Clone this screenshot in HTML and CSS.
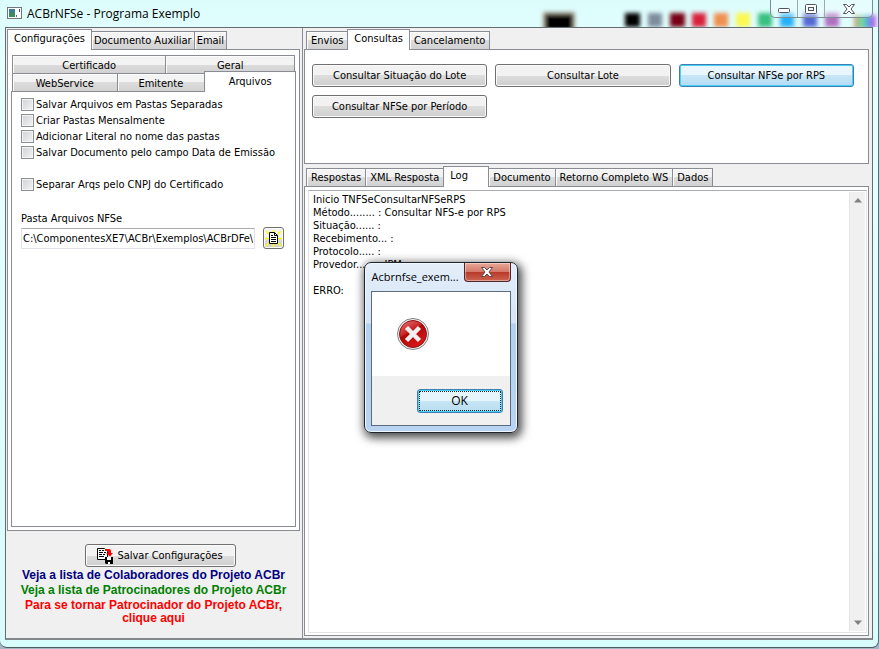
FILE: index.html
```
<!DOCTYPE html>
<html lang="pt-BR">
<head>
    <meta charset="UTF-8">
    <meta name="viewport" content="width=device-width, initial-scale=1.0">
    <title>ACBrNFSe - Programa Exemplo</title>
    <link rel="stylesheet" href="styles.css">
</head>
<body>

    <div class="window">
        <!-- Title bar, the desktop shows through the glass -->
        <div class="titlebar">
            <svg class="glass" width="360" height="27" viewBox="0 0 360 27">
                <defs>
                    <filter id="soft" x="-20%" y="-50%" width="140%" height="200%"><feGaussianBlur stdDeviation="2"/></filter>
                    <linearGradient id="rainbow">
                        <stop offset="0" stop-color="#d8a080"/>
                        <stop offset="0.4" stop-color="#60e0a0"/>
                        <stop offset="0.7" stop-color="#6090f0"/>
                        <stop offset="1" stop-color="#e050e0"/>
                    </linearGradient>
                </defs>
                <g filter="url(#soft)">
                    <rect x="24" y="12" width="32" height="18" fill="#a9a18f"/>
                    <rect x="26" y="14" width="28" height="16" fill="#000"/>
                    <rect x="106" y="13" width="15" height="14" fill="#000"/>
                    <rect x="129" y="13" width="14" height="14" fill="#7f8c9c"/>
                    <rect x="151" y="13" width="15" height="14" fill="#780018"/>
                    <rect x="173" y="13" width="14" height="14" fill="#d8203a"/>
                    <rect x="195" y="13" width="14" height="14" fill="#f09050"/>
                    <rect x="217" y="13" width="14" height="14" fill="#fcf850"/>
                    <rect x="239" y="13" width="14" height="14" fill="#38c080"/>
                    <rect x="261" y="13" width="14" height="14" fill="#28b0f8"/>
                    <rect x="284" y="13" width="14" height="14" fill="#5468d4"/>
                    <rect x="306" y="13" width="14" height="14" fill="#b070c0"/>
                    <rect x="335" y="15" width="22" height="14" fill="url(#rainbow)"/>
                </g>
            </svg>
            <svg class="app-icon" width="15" height="13" viewBox="0 0 15 13">
                <rect x="0.5" y="0.5" width="14" height="11" fill="#fff" stroke="#70787c"/>
                <rect x="2" y="2" width="6" height="8" fill="#3c7c8c"/>
                <rect x="2" y="6" width="6" height="4" fill="#3c8c5c"/>
                <rect x="9" y="8" width="1" height="2" fill="#667"/>
                <rect x="12" y="2" width="1" height="3" fill="#445"/>
            </svg>
            <span class="title">ACBrNFSe - Programa Exemplo</span>
            <div class="win-buttons">
                <button aria-label="Minimizar"><svg width="12" height="12" viewBox="0 0 12 12"><rect x="0.5" y="5.5" width="11" height="4" rx="1" fill="#fff" stroke="#4c545c"/></svg></button>
                <button aria-label="Maximizar"><svg width="12" height="12" viewBox="0 0 12 12"><rect x="0.5" y="1.5" width="11" height="9" rx="1" fill="#fff" stroke="#4c545c"/><rect x="3.5" y="4.5" width="5" height="3" fill="#e4f4f8" stroke="#4c545c"/></svg></button>
                <button class="wide" aria-label="Fechar"><svg width="12" height="12" viewBox="0 0 12 12"><path d="M0.500 1.500h3L6 4l2.500-2.500h3L8 6l3.500 4.500h-3L6 8l-2.500 2.500h-3L4 6z" fill="#fff" stroke="#4c545c"/></svg></button>
            </div>
        </div>

        <div class="client">
            <div class="sidebar">
                <div class="tabs" role="tablist">
                    <button class="tab active" role="tab">Configurações</button>
                    <button class="tab" role="tab">Documento Auxiliar</button>
                    <button class="tab" role="tab">Email</button>
                </div>
                <div class="page config-page">
                    <div class="tab-row" role="tablist">
                        <button class="tab certificado" role="tab">Certificado</button>
                        <button class="tab geral" role="tab">Geral</button>
                    </div>
                    <div class="tab-row last" role="tablist">
                        <button class="tab webservice" role="tab">WebService</button>
                        <button class="tab emitente" role="tab">Emitente</button>
                        <button class="tab arquivos active" role="tab">Arquivos</button>
                    </div>
                    <div class="page files-page">
                        <label class="check"><input type="checkbox">Salvar Arquivos em Pastas Separadas</label>
                        <label class="check"><input type="checkbox">Criar Pastas Mensalmente</label>
                        <label class="check"><input type="checkbox">Adicionar Literal no nome das pastas</label>
                        <label class="check"><input type="checkbox">Salvar Documento pelo campo Data de Emissão</label>
                        <label class="check spaced"><input type="checkbox">Separar Arqs pelo CNPJ do Certificado</label>
                        <label class="field-label" for="pasta">Pasta Arquivos NFSe</label>
                        <div class="field">
                            <input type="text" id="pasta" value="C:\ComponentesXE7\ACBr\Exemplos\ACBrDFe\ACBrNFSe">
                            <button class="btn browse" aria-label="Escolher pasta">
                                <svg width="17" height="17" viewBox="0 0 17 17">
                                    <path d="M1 1l15 15M16 1L1 16M8.500 0v17M0 8.500h17" stroke="#ffff00" stroke-width="1.500"/>
                                    <path d="M4.500 2.500h5l3 3v8h-8z" fill="#fff" stroke="#000"/>
                                    <path d="M9.500 2.500v3h3M6 5.500h2M6 7.500h5M6 9.500h5M6 11.500h5" fill="none" stroke="#000"/>
                                </svg>
                            </button>
                        </div>
                    </div>
                </div>

                <div class="footer">
                    <button class="btn save">
                        <svg width="17" height="17" viewBox="0 0 17 17">
                            <path d="M0.500 1.500h7l3 3v8h-10z" fill="#fff" stroke="#000"/>
                            <path d="M2 3.500h2M5 3.500h2M2 5.500h4M7 5.500h2M2 7.500h3M6 7.500h2M2 9.500h5" stroke="#000"/>
                            <path d="M8 2h4q2 0 2 2v2h2l-3 3.500L9 6h2V4H8z" fill="#f00"/>
                            <path d="M8 10h8v7H9l-1-1z" fill="#000"/>
                            <path d="M10 10h4v3h-4zM11 15h2v2h-2z" fill="#fff"/>
                        </svg>
                        Salvar Configurações
                    </button>
                    <a class="navy" href="#">Veja a lista de Colaboradores do Projeto ACBr</a>
                    <a class="green" href="#">Veja a lista de Patrocinadores do Projeto ACBr</a>
                    <a class="red" href="#">Para se tornar Patrocinador do Projeto ACBr,<br>clique aqui</a>
                </div>
            </div>

            <div class="main">
                <div class="tabs" role="tablist">
                    <button class="tab" role="tab">Envios</button>
                    <button class="tab active" role="tab">Consultas</button>
                    <button class="tab" role="tab">Cancelamento</button>
                </div>
                <div class="page actions">
                    <button class="btn">Consultar Situação do Lote</button>
                    <button class="btn">Consultar Lote</button>
                    <button class="btn hot">Consultar NFSe por RPS</button>
                    <button class="btn">Consultar NFSe por Período</button>
                </div>

                <div class="tabs results" role="tablist">
                    <button class="tab" role="tab">Respostas</button>
                    <button class="tab" role="tab">XML Resposta</button>
                    <button class="tab active log" role="tab">Log</button>
                    <button class="tab" role="tab">Documento</button>
                    <button class="tab" role="tab">Retorno Completo WS</button>
                    <button class="tab" role="tab">Dados</button>
                </div>
                <div class="page log-page">
                    <div class="memo">
                        <textarea aria-label="Log" readonly>Inicio TNFSeConsultarNFSeRPS
Método........ : Consultar NFS-e por RPS
Situação...... :
Recebimento... :
Protocolo..... :
Provedor...... : IPM

ERRO:</textarea>
                        <div class="scrollbar">
                            <svg width="8" height="5" viewBox="0 0 8 5"><path d="M0 4.500L4 0l4 4.500z" fill="#808080"/></svg>
                            <svg width="8" height="5" viewBox="0 0 8 5"><path d="M0 0.500h8L4 5z" fill="#808080"/></svg>
                        </div>
                    </div>
                </div>
            </div>
        </div>
    </div>

    <!-- Error message -->
    <div class="dialog" role="alertdialog" aria-label="Acbrnfse_exemplo">
        <div class="dialog-title">
            <span>Acbrnfse_exem...</span>
            <button class="dialog-close" aria-label="Fechar"><svg width="12" height="12" viewBox="0 0 12 12"><path d="M0.500 1.500h3L6 4l2.500-2.500h3L8 6l3.500 4.500h-3L6 8l-2.500 2.500h-3L4 6z" fill="#fff" stroke="#5c4448"/></svg></button>
        </div>
        <div class="dialog-box">
            <div class="dialog-body">
                <svg width="34" height="34" viewBox="0 0 34 34">
                    <defs>
                        <linearGradient id="red" x2="0.600" y2="1">
                            <stop offset="0" stop-color="#e88080"/>
                            <stop offset="0.450" stop-color="#c82424"/>
                            <stop offset="0.500" stop-color="#b00808"/>
                            <stop offset="1" stop-color="#d81818"/>
                        </linearGradient>
                    </defs>
                    <circle cx="17" cy="17" r="15.500" fill="#f4f4f4" stroke="#808080"/>
                    <circle cx="17" cy="17" r="13.500" fill="url(#red)" stroke="#901010"/>
                    <path d="M10.500 10.500l13 13M23.500 10.500l-13 13" stroke="#f0f0f0" stroke-width="4.500"/>
                </svg>
            </div>
            <div class="dialog-footer">
                <button class="ok">OK</button>
            </div>
        </div>
    </div>

</body>
</html>
```
FILE: styles.css
```
* {
    box-sizing: border-box;
}
body {
    margin: 0;
    height: 100vh;
    overflow: hidden;
    background-color: #a4b4c4;
    font-family: "DejaVu Sans Condensed", Tahoma, sans-serif;
    font-size: 11px;
    line-height: 13px;
    color: #000;
}
button, input, textarea {
    font: inherit;
    color: inherit;
}
button {
    margin: 0;
    padding: 0;
    white-space: nowrap;
}
svg {
    display: block;
    flex: none;
}

/* Window */
.window {
    display: flex;
    flex-direction: column;
    height: calc(100vh - 1px);
    padding: 0 5px 7px;
    border-right: 1px solid #5c6c74;
    border-bottom: 1px solid #4c5c60;
    border-radius: 0 0 7px 7px;
    background: linear-gradient(#dcfcfc, #e6ffff 60px, #d8fcfc);
}
.titlebar {
    position: relative;
    display: flex;
    align-items: center;
    flex: none;
    height: 27px;
    padding-left: 2px;
}
.glass {
    position: absolute;
    right: -6px;
    top: 0;
}
.title {
    margin-left: 5px;
    font-family: "Open Sans", sans-serif;
    font-size: 12px;
}
.win-buttons {
    position: relative;
    display: flex;
    align-self: flex-start;
    height: 18px;
    margin-left: auto;
    border: 1px solid #7c8c94;
    border-top: 0;
    border-radius: 0 0 5px 5px;
    background-color: rgba(255, 255, 255, 0.3);
}
.win-buttons button {
    display: flex;
    align-items: center;
    justify-content: center;
    width: 27px;
    border: 0;
    border-right: 1px solid #9caab0;
    background: none;
}
.win-buttons button.wide {
    width: 47px;
    border-right: 0;
}
.client {
    display: flex;
    flex: 1;
    min-height: 0;
    border: 1px solid #646c70;
    border-bottom: 2px solid #84888a;
    background-color: #f0f0f0;
}
.sidebar {
    display: flex;
    flex-direction: column;
    flex: none;
    width: 297px;
    padding: 1px 2px 0 1px;
    border-right: 1px solid #898c95;
}
.main {
    display: flex;
    flex-direction: column;
    flex: 1;
    min-width: 0;
    padding: 1px 3px 2px 1px;
}

/* Tabs */
.tabs {
    display: flex;
    align-items: flex-end;
    flex: none;
    height: 20px;
    padding-left: 2px;
}
.tab {
    height: 18px;
    padding: 0 4px;
    border: 1px solid #898c95;
    border-bottom: 0;
    background: linear-gradient(#f3f3f3 50%, #dcdcdc 50%, #d2d2d2);
    box-shadow: inset 1px 1px 0 #fcfcfc;
}
.tab + .tab {
    margin-left: -1px;
}
.tab.active {
    position: relative;
    height: 21px;
    margin-bottom: -1px;
    padding: 0 6px 3px;
    background: #fff;
}
.tab.log {
    width: 46px;
    text-align: left;
}
.sidebar .tabs {
    padding-left: 0;
}
.sidebar .tab {
    padding: 0 2px;
}
.sidebar .tab.active {
    padding: 0 6px 3px;
}
.page {
    border: 1px solid #898c95;
    background-color: #fff;
}

/* Settings */
.config-page {
    display: flex;
    flex-direction: column;
    flex: 1;
    padding: 5px 3px 3px;
}
.sidebar .tab-row {
    display: flex;
    align-items: flex-end;
    height: 18px;
    padding: 0 1px;
}
.sidebar .tab-row.last {
    padding-right: 0;
}
.sidebar .tab-row .tab {
    padding: 1px 0 0;
}
.sidebar .tab-row .tab.active {
    padding: 0 0 2px;
}
.certificado {
    flex: 153;
}
.geral {
    flex: 128;
}
.webservice {
    flex: 105;
}
.emitente {
    flex: 88;
}
.arquivos {
    flex: 91;
}
.files-page {
    flex: 1;
    padding: 4px 11px 0 9px;
}
.check {
    display: flex;
    align-items: center;
    height: 16px;
    white-space: nowrap;
}
.check.spaced {
    margin-top: 16px;
}
.check input {
    appearance: none;
    width: 13px;
    height: 13px;
    margin: 0 2px 0 0;
    border: 1px solid #8e8f8f;
    background: linear-gradient(135deg, #cfd2d6, #f4f4f4);
    box-shadow: inset 0 0 0 1px #f4f4f4;
}
.field-label {
    display: block;
    margin-top: 20px;
}
.field {
    display: flex;
    align-items: center;
    gap: 8px;
    margin-top: 2px;
}
.field input {
    flex: 1;
    min-width: 0;
    height: 21px;
    padding: 0 1px;
    border: 1px solid #e2e3ea;
    border-top-color: #abadb3;
}
.btn {
    display: flex;
    align-items: center;
    justify-content: center;
    height: 23px;
    border: 1px solid #707070;
    border-radius: 3px;
    background: linear-gradient(#f2f2f2 50%, #dddddd 50%, #cfcfcf);
    box-shadow: inset 0 0 0 1px #fbfbfb;
}
.btn.hot {
    border-color: #3c7fb1;
    background: linear-gradient(#eaf6fd 50%, #c8e6f7 50%, #b4dcf4);
    box-shadow: inset 0 0 0 1px #48d0fa;
}
.browse {
    width: 21px;
    height: 22px;
}
.footer {
    display: flex;
    flex-direction: column;
    align-items: center;
    flex: none;
    height: 107px;
    padding-top: 13px;
    font-family: "Liberation Sans", Arial, sans-serif;
    font-size: 12px;
    font-weight: bold;
    text-align: center;
}
.save {
    gap: 3px;
    width: 151px;
    margin-left: 13px;
    font-family: "DejaVu Sans Condensed", Tahoma, sans-serif;
    font-size: 11px;
    font-weight: normal;
}
.footer a {
    margin-top: 2px;
    text-decoration: none;
    white-space: nowrap;
}
.navy {
    color: #000080;
}
.green {
    color: #008000;
}
.red {
    color: #ff0000;
}

/* Queries */
.actions {
    display: grid;
    grid-template-columns: 1fr 1fr 1fr;
    align-content: start;
    gap: 8px;
    flex: none;
    height: 115px;
    padding: 14px 14px 0 7px;
}
.results {
    height: 22px;
}
.log-page {
    display: flex;
    flex: 1;
    min-height: 0;
    padding: 3px 1px 2px 3px;
}
.memo {
    display: flex;
    flex: 1;
    padding: 1px;
    border: 1px solid #e2e3ea;
    border-top-color: #abadb3;
}
.memo textarea {
    flex: 1;
    padding: 1px 3px;
    border: 0;
    outline: 0;
    overflow: hidden;
    resize: none;
}
.scrollbar {
    display: flex;
    flex-direction: column;
    align-items: center;
    justify-content: space-between;
    width: 16px;
    padding: 6px 0;
    border-left: 1px solid #e4e4e4;
    background-color: #f0f0f0;
}

/* Error dialog */
.dialog {
    position: absolute;
    left: calc(50% - 76px);
    top: calc(50% - 63px);
    width: 154px;
    height: 171px;
    padding: 0 6px 6px;
    border: 1px solid #20242c;
    border-radius: 7px;
    background: linear-gradient(#e4eefa, #d4e4f6 60px, #b4d0f0 61px, #b8d4f2);
    box-shadow: inset 0 0 0 1px #f0f8ff, 2px 3px 10px 2px rgba(0, 0, 0, 0.7);
}
.dialog-title {
    display: flex;
    justify-content: space-between;
    height: 28px;
    padding-left: 1px;
    font-family: "Open Sans", sans-serif;
    line-height: 28px;
}
.dialog-title span {
    white-space: nowrap;
}
.dialog-close {
    display: flex;
    align-items: center;
    justify-content: center;
    flex: none;
    width: 47px;
    height: 19px;
    border: 1px solid #50242c;
    border-top: 0;
    border-radius: 0 0 4px 4px;
    background: linear-gradient(#e8a898, #d47868 50%, #b83828 50%, #cc6450);
    box-shadow: inset 0 0 0 1px rgba(255, 255, 255, 0.4);
}
.dialog-box {
    display: flex;
    flex-direction: column;
    height: 135px;
    border: 1px solid #5c6c7c;
    background-color: #f0f0f0;
}
.dialog-body {
    flex: 1;
    padding: 25px 24px;
    background-color: #fff;
}
.dialog-footer {
    display: flex;
    justify-content: flex-end;
    flex: none;
    height: 49px;
    padding: 13px 7px 0;
}
.ok {
    width: 86px;
    height: 24px;
    border: 1px solid #3c7fb1;
    border-radius: 3px;
    background: linear-gradient(#e6f5fb 50%, #c8e6f4 50%, #b8dcf0);
    box-shadow: inset 0 0 0 1px #48d0fa;
    outline: 1px dotted #222;
    outline-offset: -3px;
    font-family: "Open Sans", sans-serif;
    font-size: 12px;
}
```
